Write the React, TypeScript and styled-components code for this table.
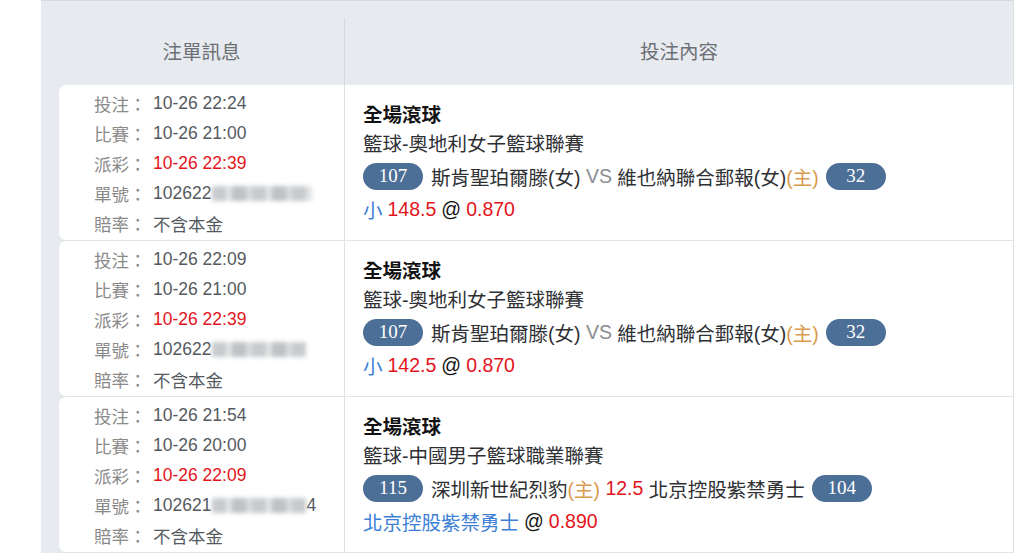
import React from "react";
import styled, { createGlobalStyle } from "styled-components";

const Global = createGlobalStyle`
  html, body { margin: 0; padding: 0; background: #fff; }
  body { font-family: "Liberation Sans", "Noto Sans CJK TC", sans-serif; }
`;

const Table = styled.div`
  margin-left: 41px;
  width: 972px;
  background: #e7eaef;
  border-top: 1px solid #d6dae0;
  border-right: 1px solid #dedfe2;
`;

const Header = styled.div`
  display: grid;
  grid-template-columns: 285px 1fr;
  margin-left: 18px;
  padding-top: 17px;
`;

const HeaderCell = styled.div<{ $divider?: boolean }>`
  height: 67px;
  display: flex;
  align-items: center;
  justify-content: center;
  padding-bottom: 2px;
  box-sizing: border-box;
  font-size: 19.5px;
  color: #6c6f74;
  border-left: ${(p) => (p.$divider ? "1px solid #d5d8dd" : "none")};
`;

const Row = styled.div`
  display: grid;
  grid-template-columns: 285px 1fr;
  margin-left: 18px;
  border-bottom: 1px solid #e4e5e7;
  height: 156px;
  box-sizing: border-box;
`;

const InfoCell = styled.div`
  background: #fff;
  border-radius: 7px 0 0 7px;
  padding: 3px 0 0 35px;
`;

const InfoLine = styled.div`
  display: flex;
  align-items: center;
  height: 30px;
  font-size: 17.5px;
  white-space: nowrap;
`;

const Label = styled.span`
  color: #8a8a8a;
  width: 54px;
`;

const Value = styled.span<{ $red?: boolean }>`
  margin-left: 5px;
  color: ${(p) => (p.$red ? "#e3141c" : "#555a60")};
  display: flex;
  align-items: center;
`;

const Blur = styled.span<{ $w: number }>`
  display: inline-block;
  width: ${(p) => p.$w}px;
  height: 15px;
  margin-left: 1px;
  background: repeating-linear-gradient(
    90deg,
    #bfc2c5 0 14px,
    #dcdee0 14px 20px,
    #b4b7bb 20px 34px,
    #d3d5d7 34px 40px
  );
  filter: blur(2px);
  opacity: 0.85;
`;

const BetCell = styled.div`
  background: #fff;
  border-left: 1px solid #e0e1e3;
  padding: 16px 0 0 18px;
  font-size: 19.5px;
  color: #2e3033;
`;

const Title = styled.div`
  font-weight: bold;
  color: #111;
  height: 29px;
  line-height: 29px;
`;

const League = styled.div`
  height: 29px;
  line-height: 29px;
  color: #2e3033;
`;

const Teams = styled.div`
  display: flex;
  align-items: center;
  height: 34px;
  white-space: pre;
`;

const Badge = styled.span<{ $left?: boolean }>`
  display: inline-flex;
  align-items: center;
  justify-content: center;
  width: 60px;
  height: 27px;
  border-radius: 14px;
  background: #4c6f97;
  color: #fff;
  font-family: "Liberation Serif", serif;
  font-size: 19px;
  margin: ${(p) => (p.$left ? "0 8px 0 0" : "0 0 0 7px")};
`;

const Colored = styled.span<{ $c: string }>`
  color: ${(p) => p.$c};
`;

const BetLine = styled.div`
  display: flex;
  align-items: center;
  height: 33px;
  white-space: nowrap;
  gap: 5px;
`;

const RED = "#e3141c";
const BLUE = "#3d7fd6";
const ORANGE = "#d99b4e";
const GREY = "#8a8d91";

type Bet = {
  placed: string;
  match: string;
  settle: string;
  order: string;
  blur: number;
  tail?: string;
  league: string;
  teams: React.ReactNode;
  hs: string;
  as: string;
  line: React.ReactNode;
};

const Home = () => <Colored $c={ORANGE}>(主)</Colored>;

const austria = (
  <>
    {"斯肯聖珀爾滕(女) "}
    <Colored $c={GREY}>VS</Colored>
    {" 維也納聯合郵報(女)"}
    <Home />
  </>
);

const bets: Bet[] = [
  {
    placed: "10-26 22:24",
    match: "10-26 21:00",
    settle: "10-26 22:39",
    order: "102622",
    blur: 100,
    league: "籃球-奧地利女子籃球聯賽",
    hs: "107",
    as: "32",
    teams: austria,
    line: (
      <>
        <Colored $c={BLUE}>小</Colored>
        <Colored $c={RED}>148.5</Colored>
        <Colored $c="#111">@</Colored>
        <Colored $c={RED}>0.870</Colored>
      </>
    ),
  },
  {
    placed: "10-26 22:09",
    match: "10-26 21:00",
    settle: "10-26 22:39",
    order: "102622",
    blur: 94,
    league: "籃球-奧地利女子籃球聯賽",
    hs: "107",
    as: "32",
    teams: austria,
    line: (
      <>
        <Colored $c={BLUE}>小</Colored>
        <Colored $c={RED}>142.5</Colored>
        <Colored $c="#111">@</Colored>
        <Colored $c={RED}>0.870</Colored>
      </>
    ),
  },
  {
    placed: "10-26 21:54",
    match: "10-26 20:00",
    settle: "10-26 22:09",
    order: "102621",
    blur: 94,
    tail: "4",
    league: "籃球-中國男子籃球職業聯賽",
    hs: "115",
    as: "104",
    teams: (
      <>
        {"深圳新世紀烈豹"}
        <Home />
        <Colored $c={RED}>{" 12.5 "}</Colored>
        {"北京控股紫禁勇士"}
      </>
    ),
    line: (
      <>
        <Colored $c={BLUE}>北京控股紫禁勇士</Colored>
        <Colored $c="#111">@</Colored>
        <Colored $c={RED}>0.890</Colored>
      </>
    ),
  },
];

export default function App() {
  return (
    <>
      <Global />
      <Table>
        <Header>
          <HeaderCell>注單訊息</HeaderCell>
          <HeaderCell $divider>投注內容</HeaderCell>
        </Header>
        {bets.map((b, i) => (
          <Row key={i}>
            <InfoCell>
              <InfoLine>
                <Label>投注：</Label>
                <Value>{b.placed}</Value>
              </InfoLine>
              <InfoLine>
                <Label>比賽：</Label>
                <Value>{b.match}</Value>
              </InfoLine>
              <InfoLine>
                <Label>派彩：</Label>
                <Value $red>{b.settle}</Value>
              </InfoLine>
              <InfoLine>
                <Label>單號：</Label>
                <Value>
                  {b.order}
                  <Blur $w={b.blur} />
                  {b.tail}
                </Value>
              </InfoLine>
              <InfoLine>
                <Label>賠率：</Label>
                <Value>不含本金</Value>
              </InfoLine>
            </InfoCell>
            <BetCell>
              <Title>全場滾球</Title>
              <League>{b.league}</League>
              <Teams>
                <Badge $left>{b.hs}</Badge>
                {b.teams}
                <Badge>{b.as}</Badge>
              </Teams>
              <BetLine>{b.line}</BetLine>
            </BetCell>
          </Row>
        ))}
      </Table>
    </>
  );
}
